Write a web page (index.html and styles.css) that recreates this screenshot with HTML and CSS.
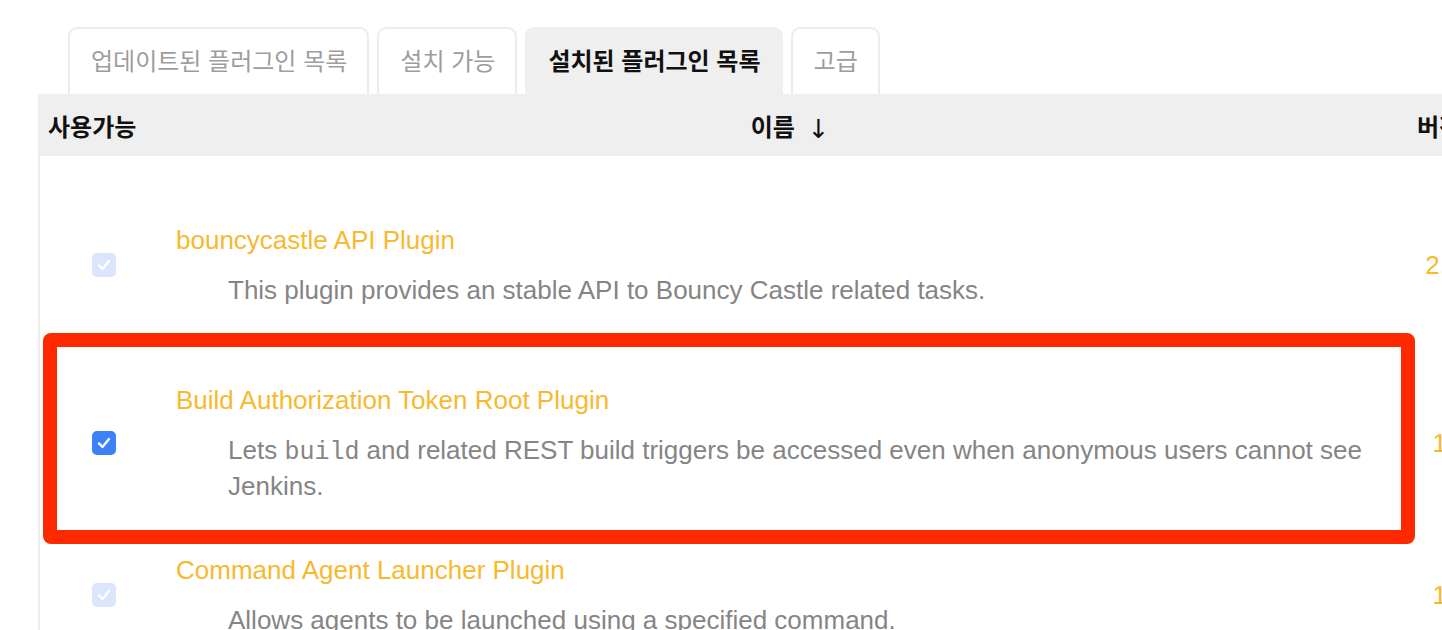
FILE: index.html
```html
<!DOCTYPE html>
<html lang="ko">
<head>
<meta charset="utf-8">
<title>플러그인 관리</title>
<link rel="stylesheet" href="styles.css">
</head>
<body>
<div class="page">
  <div class="tabs">
    <div class="tab">업데이트된 플러그인 목록</div>
    <div class="tab">설치 가능</div>
    <div class="tab active">설치된 플러그인 목록</div>
    <div class="tab">고급</div>
  </div>
  <div class="table">
    <div class="thead">
      <div class="c1">사용가능</div>
      <div class="c2 center">이름 <span class="arrow">↓</span></div>
      <div class="c3">버전</div>
    </div>
    <div class="row r1">
      <div class="c1"><span class="cb disabled"><svg viewBox="0 0 24 24"><path d="M6.5 12.5l3.8 3.8 7.2-8.6"/></svg></span></div>
      <div class="c2">
        <div class="name">bouncycastle API Plugin</div>
        <div class="desc">This plugin provides an stable API to Bouncy Castle related tasks.</div>
      </div>
      <div class="c3 ver">2.20</div>
    </div>
    <div class="row r2">
      <div class="c1"><span class="cb"><svg viewBox="0 0 24 24"><path d="M6.5 12.5l3.8 3.8 7.2-8.6"/></svg></span></div>
      <div class="c2">
        <div class="name">Build Authorization Token Root Plugin</div>
        <div class="desc">Lets <code>build</code> and related REST build triggers be accessed even when anonymous users cannot see Jenkins.</div>
      </div>
      <div class="c3 ver">1.6</div>
    </div>
    <div class="row r3">
      <div class="c1"><span class="cb disabled"><svg viewBox="0 0 24 24"><path d="M6.5 12.5l3.8 3.8 7.2-8.6"/></svg></span></div>
      <div class="c2">
        <div class="name">Command Agent Launcher Plugin</div>
        <div class="desc">Allows agents to be launched using a specified command.</div>
      </div>
      <div class="c3 ver">1.4</div>
    </div>
  </div>
  <div class="highlight"></div>
</div>
</body>
</html>
```

FILE: styles.css
```css
html, body {
  margin: 0;
  padding: 0;
  background: #ffffff;
  overflow: hidden;
}
body {
  width: 1442px;
  height: 630px;
  font-family: "Liberation Sans", Arial, "Noto Sans CJK KR", sans-serif;
}
.page {
  position: relative;
  padding: 27px 0 0 38px;
  width: 1600px;
}
.tabs {
  display: flex;
  gap: 8px;
  margin-left: 30px;
  height: 67px;
}
.tab {
  box-sizing: border-box;
  height: 69px;
  padding: 0 20px 6px 21px;
  border: 2px solid #ececec;
  border-bottom: none;
  border-radius: 9px 9px 0 0;
  font-family: "Noto Sans CJK KR", "Liberation Sans", sans-serif;
  font-size: 24px;
  color: #9d9d9d;
  display: flex;
  align-items: center;
  background: #fff;
}
.tab.active {
  background: #efefef;
  border-color: #efefef;
  color: #111;
  font-weight: 700;
}
.table {
  position: relative;
  width: 1560px;
  border-left: 2px solid #ececec;
}
.thead {
  display: flex;
  height: 62px;
  align-items: center;
  background: #efefef;
  margin-left: -2px;
  font-family: "Noto Sans CJK KR", "Liberation Sans", sans-serif;
  font-size: 24px;
  font-weight: 700;
  color: #111;
}
.thead .c1 {
  width: 132px;
  padding-left: 10px;
  box-sizing: border-box;
}
.thead .c2 {
  width: 1240px;
  text-align: center;
}
.thead .c3 {
  padding-left: 7px;
}
.arrow {
  font-family: "DejaVu Sans", sans-serif;
  font-weight: 400;
  font-size: 26px;
  margin-left: 6px;
  position: relative;
  top: 2px;
}
.row {
  display: flex;
  align-items: center;
}
.row .c1 {
  width: 128px;
  display: flex;
  justify-content: center;
}
.row .c2 {
  width: 1242px;
  padding-left: 8px;
  box-sizing: border-box;
}
.row .c3 {
  width: 81px;
  text-align: center;
}
.r1 { padding-top: 66px; padding-bottom: 36px; }
.r2 { padding-top: 38px; padding-bottom: 24px; }
.r3 { padding-top: 24px; padding-bottom: 24px; }
.cb {
  width: 24px;
  height: 24px;
  border-radius: 5px;
  background: #3a82f6;
  display: flex;
  align-items: center;
  justify-content: center;
}
.cb.disabled {
  background: #dbe6fd;
}
.cb svg {
  width: 22px;
  height: 22px;
  fill: none;
  stroke: #ffffff;
  stroke-width: 2.6;
  stroke-linecap: round;
  stroke-linejoin: round;
}
.name {
  font-size: 26px;
  line-height: 36px;
  color: #f7b92e;
}
.desc {
  margin: 14px 0 0 52px;
  font-size: 26px;
  line-height: 36px;
  color: #858585;
  max-width: 1175px;
}
.desc code {
  font-family: "Liberation Mono", "Courier New", monospace;
  font-size: 25px;
  line-height: 1;
}
.ver {
  font-size: 26px;
  color: #f7b92e;
}
.highlight {
  position: absolute;
  left: 43px;
  top: 333px;
  width: 1372px;
  height: 211px;
  box-sizing: border-box;
  border: 14px solid #ff2900;
  border-radius: 8px;
  pointer-events: none;
}
```
